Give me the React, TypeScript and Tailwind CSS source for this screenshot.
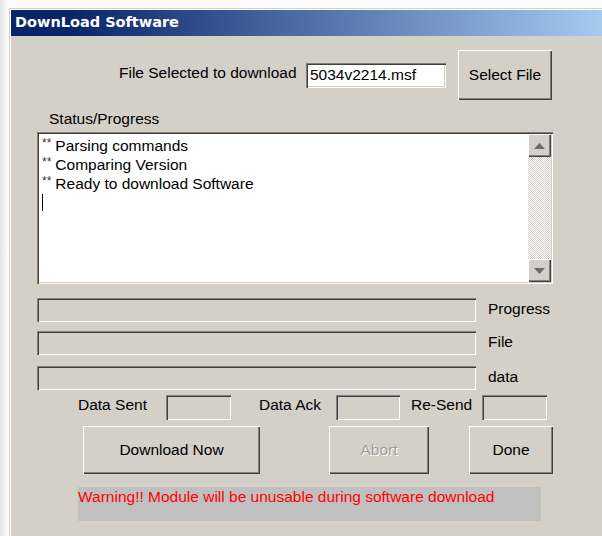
import React from 'react'

// classic 3D borders
const sunken =
  'shadow-[inset_1px_1px_0_#808080,inset_2px_2px_0_#404040,inset_-1px_-1px_0_#ffffff,inset_-2px_-2px_0_#d4d0c8]'
const raised =
  'shadow-[inset_1px_1px_0_#ffffff,inset_-1px_-1px_0_#404040,inset_-2px_-2px_0_#808080]'

function Button({ label, className = '', disabled = false }: { label: string; className?: string; disabled?: boolean }) {
  return (
    <div
      className={`flex items-center justify-center bg-[#d4d0c8] ${raised} ${className} ${
        disabled ? 'text-[#a19e98] [text-shadow:1px_1px_0_#ffffff]' : 'text-black'
      }`}
    >
      {label}
    </div>
  )
}

function Arrow({ up }: { up?: boolean }) {
  return (
    <div className={`flex h-[23px] w-[23px] items-center justify-center bg-[#d4d0c8] ${raised}`}>
      <svg width="11" height="6" viewBox="0 0 11 6">
        {up ? <polygon points="0,6 11,6 5.5,0" fill="#6b6b6b" /> : <polygon points="0,0 11,0 5.5,6" fill="#6b6b6b" />}
      </svg>
    </div>
  )
}

function LogLine({ text }: { text: string }) {
  return (
    <div className="flex h-[19px] items-center">
      <span className="mr-[4px] self-start pt-[1px] text-[12px] leading-[12px] text-[#333]">**</span>
      <span>{text}</span>
    </div>
  )
}

function Bar({ label, className = '' }: { label: string; className?: string }) {
  return (
    <div className={`ml-[26px] flex items-start ${className}`}>
      <div className={`h-[24px] w-[439px] bg-[#d4d0c8] ${sunken}`} />
      <span className="ml-[12px] mt-[1px] leading-[19px]">{label}</span>
    </div>
  )
}

export default function App() {
  return (
    <div className="h-[536px] w-[602px] overflow-hidden bg-[linear-gradient(to_right,#e4e4e4,#fbfbfb_8px)] pl-[9px] pt-[8px] font-['Liberation_Sans',Arial,sans-serif] text-[15.5px] text-black">
      <div className="h-full border-l border-t border-[#d4d0c8]">
        <div className="h-full border-l border-t border-white bg-[#d4d0c8]">
          {/* title bar */}
          <div className="flex h-[26px] items-center bg-[linear-gradient(to_right,#0a246a_10%,#a6caf0)] pl-[4px] font-['DejaVu_Sans',Verdana,sans-serif] text-[14.5px] font-bold text-white">
            DownLoad Software
          </div>

          {/* file selection */}
          <div className="ml-[108px] mt-[14px] flex h-[50px] items-center">
            <span className="mb-[4px] w-[187px]">File Selected to download</span>
            <div className={`flex h-[25px] w-[140px] items-center bg-white pl-[4px] ${sunken}`}>5034v2214.msf</div>
            <Button label="Select File" className="ml-[12px] h-[50px] w-[94px]" />
          </div>

          <div className="ml-[38px] mt-[10px] leading-[17px]">Status/Progress</div>

          {/* status log */}
          <div className={`ml-[26px] mt-[5px] flex h-[152px] w-[516px] bg-white p-[2px] ${sunken}`}>
            <div className="flex-1 pl-[3px] pt-[2px]">
              <LogLine text="Parsing commands" />
              <LogLine text="Comparing Version" />
              <LogLine text="Ready to download Software" />
              <div className="mt-[1px] h-[17px] w-0 border-l border-black" />
            </div>
            <div className="flex w-[23px] flex-col">
              <Arrow up />
              <div className="flex-1 bg-[repeating-conic-gradient(#d4d0c8_0_25%,#ffffff_0_50%)] bg-[length:2px_2px]" />
              <Arrow />
            </div>
          </div>

          <Bar label="Progress" className="mt-[14px]" />
          <Bar label="File" className="mt-[9px]" />
          <Bar label="data" className="mt-[11px]" />

          {/* counters */}
          <div className="ml-[67px] mt-[5px] flex items-start">
            <span className="w-[88px] leading-[20px]">Data Sent</span>
            <div className={`h-[25px] w-[65px] ${sunken}`} />
            <span className="ml-[28px] w-[77px] leading-[20px]">Data Ack</span>
            <div className={`h-[25px] w-[64px] ${sunken}`} />
            <span className="ml-[11px] w-[71px] leading-[20px]">Re-Send</span>
            <div className={`h-[25px] w-[65px] ${sunken}`} />
          </div>

          {/* actions */}
          <div className="ml-[72px] mt-[6px] flex">
            <Button label="Download Now" className="h-[48px] w-[177px]" />
            <Button label="Abort" className="ml-[69px] h-[48px] w-[100px]" disabled />
            <Button label="Done" className="ml-[40px] h-[48px] w-[84px]" />
          </div>

          <div className="ml-[67px] mt-[13px] h-[34px] w-[463px] bg-[#c0c0c0] leading-[19px] text-[#ff0000]">
            Warning!! Module will be unusable during software download
          </div>
        </div>
      </div>
    </div>
  )
}
